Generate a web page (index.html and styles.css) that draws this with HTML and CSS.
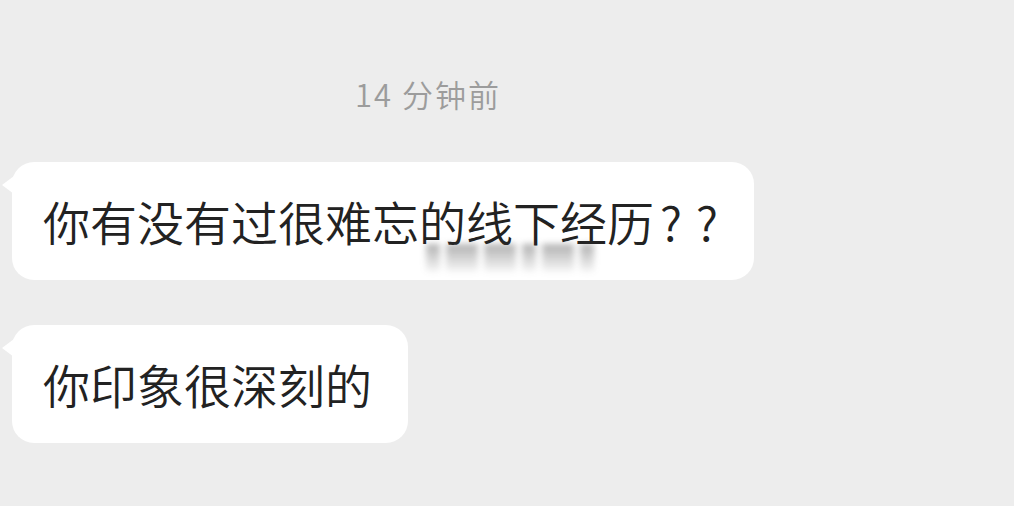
FILE: index.html
```html
<!DOCTYPE html>
<html lang="zh-CN">
<head>
  <meta charset="UTF-8">
  <meta name="viewport" content="width=device-width, initial-scale=1.0">
  <title>聊天记录</title>
  <link rel="stylesheet" href="styles.css">
</head>
<body>

<div class="chat">
  <!-- Time divider -->
  <div class="chat-time">14 分钟前</div>

  <!-- Incoming messages -->
  <div class="bubble">
    你有没有过很难忘的线下经历<span class="marks">??</span>
    <!-- blurred watermark smudge -->
    <span class="watermark">
      <i></i><i class="wide"></i><i class="wide"></i><i></i><i class="wide"></i><i></i>
    </span>
  </div>
  <div class="bubble">你印象很深刻的</div>
</div>

</body>
</html>
```

FILE: styles.css
```css
/* Global Styles */
* {
  box-sizing: border-box;
}

body {
  margin: 0;
  background-color: #ededed;
  font-family: "Noto Sans CJK SC", "Noto Sans", sans-serif;
  color: #222222;
  height: 506px;
  overflow: hidden;
}

.chat {
  display: flex;
  flex-direction: column;
  align-items: flex-start;
  padding: 72px 0 0 12px;
}

/* Time divider */
.chat-time {
  font-size: 31px;
  font-weight: 350;
  line-height: 44px;
  letter-spacing: 2px;
  color: #9c9c9c;
  margin-left: 343px;
  margin-bottom: 46px;
}

/* Message bubble */
.bubble {
  position: relative;
  background-color: #ffffff;
  border-radius: 22px;
  padding: 26px 36px 26px 31px;
  font-size: 47px;
  font-weight: 350;
  line-height: 66px;
  white-space: nowrap;
  margin-bottom: 45px;
}

.bubble::before {
  content: "";
  position: absolute;
  left: -10px;
  top: 14px;
  border-right: 12px solid #ffffff;
  border-top: 9px solid transparent;
  border-bottom: 9px solid transparent;
}

.marks {
  letter-spacing: 14px;
  margin-left: 6px;
  margin-right: -14px;
}

/* Watermark smudge under the first line */
.watermark {
  position: absolute;
  left: 414px;
  top: 82px;
  display: flex;
  gap: 6px;
  filter: blur(3px);
}

.watermark i {
  display: block;
  width: 14px;
  height: 28px;
  background: linear-gradient(to bottom, rgba(60, 60, 60, 0.4), rgba(60, 60, 60, 0.04));
}

.watermark i.wide {
  width: 32px;
}
```
